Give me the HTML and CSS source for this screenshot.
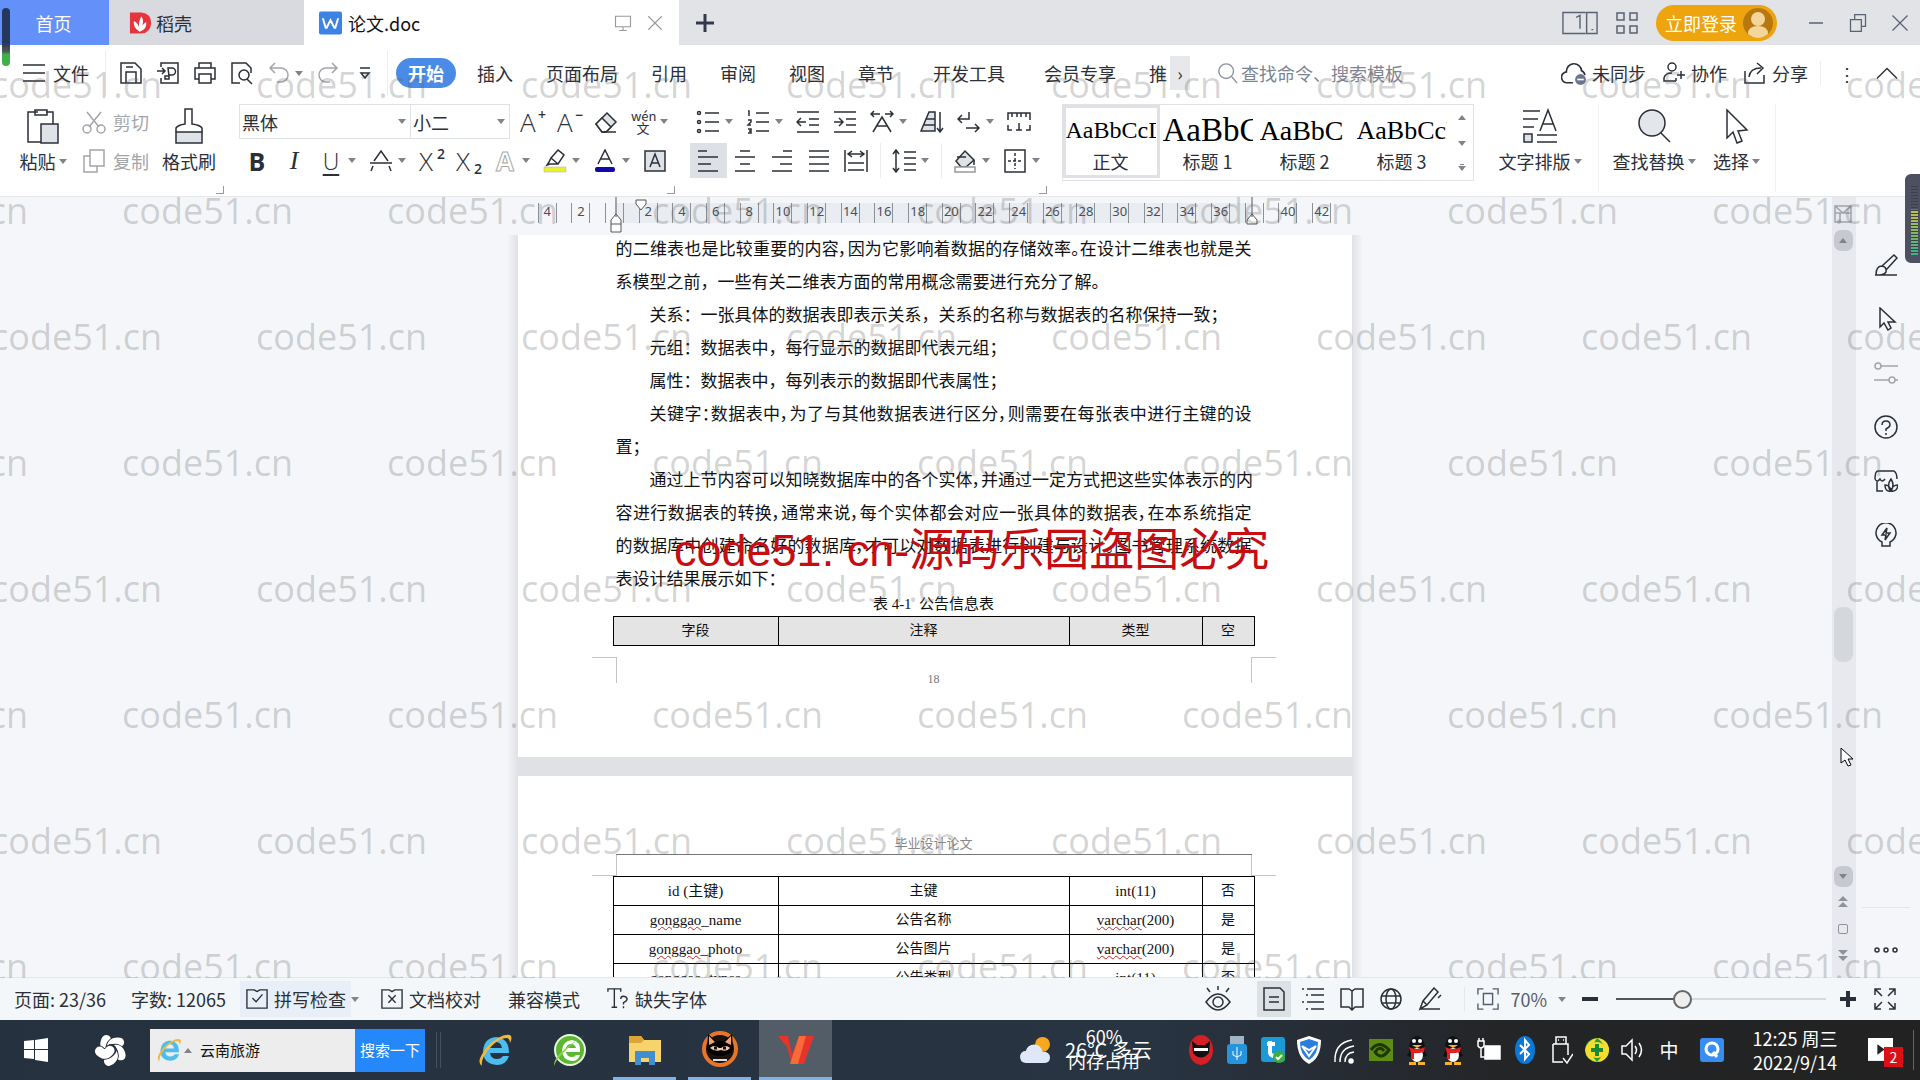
FILE: index.html
```html
<!DOCTYPE html>
<html lang="zh-CN">
<head>
<meta charset="utf-8">
<title>论文.doc</title>
<link rel="stylesheet" href="styles.css">
</head>
<body>
<svg class="sprite" aria-hidden="true">
  <symbol id="save" viewBox="0 0 24 24"><path d="M2 2h14l6 6v14H2zM7 22V11h10v11M7 6h7"/></symbol>
  <symbol id="export" viewBox="0 0 24 24"><path d="M5 6V2h17v20H5v-5M1 10h8M6 7l3 3-3 3M12 7h4a3 3 0 0 1 0 7h-3v4h-4v-3h4z"/></symbol>
  <symbol id="print" viewBox="0 0 24 24"><path d="M6 7V2h12v5M6 18H2V7h20v11h-4M6 13h12v9H6z"/></symbol>
  <symbol id="preview" viewBox="0 0 24 24"><path d="M10 22H2V2h14l5 5v5"/><circle cx="14" cy="14" r="5"/><path d="M17 18l5 5"/></symbol>
  <symbol id="undo" viewBox="0 0 24 24"><path d="M8 2L3 7l5 5M3 7h11a7 7 0 0 1 0 14h-4"/></symbol>
  <symbol id="redo" viewBox="0 0 24 24"><path d="M16 2l5 5-5 5M21 7H10a7 7 0 0 0 0 14h4"/></symbol>
  <symbol id="more" viewBox="0 0 24 24"><path d="M7 7h10M8 12h8l-4 5z"/></symbol>
  <symbol id="lens" viewBox="0 0 24 24"><circle cx="10" cy="10" r="8"/><path d="M16 16l6 7"/></symbol>
  <symbol id="cloud" viewBox="0 0 24 24"><path d="M11 21H6a5 5 0 0 1-1-10 7 7 0 0 1 14-1 5 5 0 0 1 3 4"/><circle cx="18" cy="18" r="5" fill="#6a7690" stroke="none"/><path d="M15 18h6" stroke="#fff"/></symbol>
  <symbol id="team" viewBox="0 0 24 24"><circle cx="10" cy="6" r="4"/><path d="M14 20H2v-3q1-5 8-5M14 20v-3M19 10v8M15 14h8"/></symbol>
  <symbol id="share" viewBox="0 0 24 24"><path d="M2 10v12h19v-8M6 16Q7 7 18 7M14 2l6 5-6 6"/></symbol>
  <symbol id="cut" viewBox="0 0 24 24"><path d="M5 2l12 15M19 2L7 17"/><circle cx="5" cy="19" r="4"/><circle cx="19" cy="19" r="4"/></symbol>
  <symbol id="copy" viewBox="0 0 24 24"><path d="M8 1h14v16H8zM8 7H2v16h13v-6"/></symbol>
  <symbol id="paste" viewBox="0 0 34 36"><path d="M12 4H2v30h14M20 4h7v12"/><path d="M9 2h12v5H9z"/><path d="M15 16h17v19H15z" fill="#dfe3e8"/></symbol>
  <symbol id="brush" viewBox="0 0 30 36"><path d="M2 24h26v11H2z" fill="#dfe3e8"/><path d="M2 24v-4q2-3 9-4V1h7v15q8 1 10 4v4"/></symbol>
  <symbol id="eraser" viewBox="0 0 24 24"><path d="M2 14L13 3l9 9-10 10H8z" fill="#dfe3e8"/><path d="M2 14l6-6 9 9-5 5H8z" fill="#fff"/><path d="M8 22h14"/></symbol>
  <symbol id="strike" viewBox="0 0 24 24"><path d="M5 12l7-10 7 10M1 14h22M4 17l-2 5M20 17l2 5"/></symbol>
  <symbol id="hilite" viewBox="0 0 24 24"><path d="M1 18h22v5H1z" fill="#eaf22c" stroke="#aaa" stroke-width=".5"/><path d="M8 9l7-8 6 5-6 9H7l-3 1 2-3zM8 9l7 6"/></symbol>
  <symbol id="fcolor" viewBox="0 0 24 24"><rect x="2" y="18" width="20" height="5" rx="2" fill="#1207a8" stroke="none"/><path d="M5 15l7-14 7 14M8 10h8"/></symbol>
  <symbol id="boxa" viewBox="0 0 24 24"><path d="M2 2h20v20H2z" fill="#dfe3e8"/><path d="M7 18l5-13 5 13M9 14h6"/></symbol>
  <symbol id="bullets" viewBox="0 0 24 24"><path d="M9 3h14M9 12h14M9 21h14"/><circle cx="3" cy="3" r="1.500"/><circle cx="3" cy="12" r="1.500"/><circle cx="3" cy="21" r="1.500"/></symbol>
  <symbol id="numbers" viewBox="0 0 24 24"><path d="M10 3h13M10 12h13M10 21h13M2 1h1v5M2 10h3v2l-3 3h3M2 19h3v4H2M3 21h2"/></symbol>
  <symbol id="outdent" viewBox="0 0 24 24"><path d="M1 2h22M13 9h10M13 15h10M1 22h22M10 12H1M5 8l-4 4 4 4"/></symbol>
  <symbol id="indent" viewBox="0 0 24 24"><path d="M1 2h22M13 9h10M13 15h10M1 22h22M1 12h9M6 8l4 4-4 4"/></symbol>
  <symbol id="awide" viewBox="0 0 24 24"><path d="M3 22L12 7l9 15M7 16h10M1 4h9M4 1L1 4l3 3M23 4h-8M20 1l3 3-3 3"/></symbol>
  <symbol id="sort" viewBox="0 0 24 24"><path d="M1 21L9 2h6v19zM6 9h9M4 15h11" fill="#dfe3e8"/><path d="M20 2v20M17 18l3 4 3-4"/></symbol>
  <symbol id="ret" viewBox="0 0 24 24"><path d="M12 2v7H1M5 5L1 9l4 4M9 18h13M18 14l4 4-4 4"/></symbol>
  <symbol id="tabs" viewBox="0 0 24 24"><path d="M1 10V3h22v7M5 3v4M10 3v4M14 3v4M19 3v4M1 15v5h4M23 15v5h-4M12 13v7M9 20h6"/></symbol>
  <symbol id="left" viewBox="0 0 24 24"><path d="M2 2h9M2 8h20M2 15h13M2 22h20"/></symbol>
  <symbol id="center" viewBox="0 0 24 24"><path d="M7 2h10M2 8h20M7 15h10M2 22h20"/></symbol>
  <symbol id="right" viewBox="0 0 24 24"><path d="M13 2h9M2 8h20M10 15h12M2 22h20"/></symbol>
  <symbol id="justify" viewBox="0 0 24 24"><path d="M2 2h20M2 8h20M2 15h20M2 22h20"/></symbol>
  <symbol id="distr" viewBox="0 0 24 24"><path d="M1 1v22M23 1v22M4 5h16M8 2L4 5l4 3M16 2l4 3-4 3M4 14h16M4 21h16"/></symbol>
  <symbol id="spacing" viewBox="0 0 24 24"><path d="M4 1v22M1 5l3-4 3 4M1 19l3 4 3-4M12 3h12M12 9h12M12 15h12M12 21h12"/></symbol>
  <symbol id="fill" viewBox="0 0 24 24"><path d="M3 12L12 2l9 9-8 7H8z" fill="#dfe3e8"/><path d="M2 18h20v5H2z" fill="#fff" stroke="#999"/><path d="M4 8h9M21 11v5"/></symbol>
  <symbol id="border" viewBox="0 0 24 24"><path d="M2 1h20v22H2z"/><path d="M12 4v16M5 12h14" stroke-dasharray="3 2"/></symbol>
  <symbol id="typeset" viewBox="0 0 36 36"><path d="M1 3h17M1 11h15M1 19h11M18 23l8-21 8 21M21 16h10M15 27h20M15 34h20"/><path d="M2 26h8v8H2z" fill="#dfe3e8"/></symbol>
  <symbol id="find" viewBox="0 0 36 36"><circle cx="16" cy="15" r="13" fill="#e3e6ea"/><path d="M25 25l9 9"/></symbol>
  <symbol id="pointer" viewBox="0 0 24 36"><path d="M2 2v28l6-6 4 11 5-2-4-10 9-1z" fill="#fff"/></symbol>
  <symbol id="screen" viewBox="0 0 24 24"><path d="M2 3h20v14H2zM12 17v5M7 22h10"/></symbol>
  <symbol id="x" viewBox="0 0 24 24"><path d="M3 3l18 18M21 3L3 21"/></symbol>
  <symbol id="win" viewBox="0 0 24 24"><path d="M3 8h13v14H3zM8 8V2h13v14h-5"/></symbol>
  <symbol id="apps" viewBox="0 0 24 24"><path d="M2 2h7v7H2zM15 2h7v7h-7zM2 15h7v7H2zM15 15h7v7h-7z"/></symbol>
  <symbol id="device" viewBox="0 0 38 24"><path d="M25 1H1v22h24M37 1H26v22h11zM15 6l4-2v14M31 19h2"/></symbol>
  <symbol id="sbrush" viewBox="0 0 24 24"><path d="M1 22h22M2 22q0-9 6-9 5 1 4 6-2 3-7 3M8 13L20 2l3 3-11 12"/></symbol>
  <symbol id="scursor" viewBox="0 0 24 24"><path d="M6 1v19l4-4 4 7 3-2-3-6h7z"/></symbol>
  <symbol id="sliders" viewBox="0 0 24 24"><circle cx="4" cy="5" r="3"/><circle cx="18" cy="19" r="3"/><path d="M7 5h17M0 19h15M21 19h3"/></symbol>
  <symbol id="help" viewBox="0 0 24 24"><circle cx="12" cy="12" r="11"/><path d="M8 10q0-4 4-4t4 4q0 2-4 4v2M12 18v2"/></symbol>
  <symbol id="shop" viewBox="0 0 24 24"><path d="M3 12v10h6M1 10q0-8 3-8h16q3 2 3 8M1 10q2 4 5 0 2 4 5 0"/><path d="M17 22q-5-5 0-12 4 6 0 12zM17 22q-6 1-6-6 5 0 6 6zM17 22q6 1 7-6-6 0-7 6z"/></symbol>
  <symbol id="bulb" viewBox="0 0 24 24"><path d="M8 23v-4a10 10 0 1 1 8 0v4zM13 5l-5 7h4l-1 5 5-7h-4z"/></symbol>
  <symbol id="check" viewBox="0 0 24 24"><path d="M12 4l-3-2H1v20h7M12 4l3-2h8v20H1M7 11l4 4 7-8"/></symbol>
  <symbol id="proof" viewBox="0 0 24 24"><path d="M12 4l-3-2H1v20h22V2h-8zM8 8l8 8M16 8l-8 8"/></symbol>
  <symbol id="tq" viewBox="0 0 24 24"><path d="M1 4V1h14v3M8 1v20M5 21h6M15 12q0-3 3-3t4 3q0 2-4 4v2M18 20v2"/></symbol>
  <symbol id="eye" viewBox="0 0 28 28"><path d="M2 17q12-16 24 0-12 16-24 0zM14 1v4M3 3l3 4M25 3l-3 4"/><circle cx="14" cy="17" r="5"/></symbol>
  <symbol id="doc" viewBox="0 0 24 24"><path d="M2 1h16l4 4v18H2zM7 10h10M7 15h10"/></symbol>
  <symbol id="outline" viewBox="0 0 24 24"><path d="M1 2h2M6 2h17M5 8h2M10 8h13M1 15h2M6 15h17M5 22h2M10 22h13"/></symbol>
  <symbol id="book" viewBox="0 0 24 24"><path d="M12 4l-3-2H1v18h8l3 3 3-3h8V2h-8zM12 4v18"/></symbol>
  <symbol id="globe" viewBox="0 0 24 24"><circle cx="12" cy="12" r="10"/><ellipse cx="12" cy="12" rx="5" ry="10"/><path d="M2 9h20M2 16h20"/></symbol>
  <symbol id="pen" viewBox="0 0 24 24"><path d="M2 22l3-8L16 1l4 4L9 18zM2 22h20M5 14l4 4M20 11l3-3"/></symbol>
  <symbol id="fit" viewBox="0 0 24 24"><path d="M7 1H1v6M17 1h6v6M1 17v6h6M23 17v6h-6M7 6h10v12H7z"/></symbol>
  <symbol id="expand" viewBox="0 0 24 24"><path d="M2 8V2h6M2 2l7 7M16 2h6v6M22 2l-7 7M2 16v6h6M2 22l7-7M22 16v6h-6M22 22l-7-7"/></symbol>
  <symbol id="ie" viewBox="0 0 36 36"><path d="M32 21H13q1 6 7 6 4 0 6-3h6q-3 9-12 9Q6 32 6 19 7 6 19 5q13 1 13 16zM13 16h12q-1-6-6-6t-6 6z" fill="#4dbdf0" stroke="none"/><path d="M5 34Q-2 30 10 15 24 1 33 3q3 2 0 8 0-5-4-5Q18 7 7 24q-3 6-2 10z" fill="#f0b93a" stroke="none"/></symbol>
  <symbol id="penguin" viewBox="0 0 24 32"><g stroke="none"><ellipse cx="12" cy="14" rx="8" ry="12" fill="#111"/><path d="M2 22l4-8h12l4 8-4 1H6z" fill="#111"/><ellipse cx="12" cy="21" rx="6" ry="7" fill="#fff"/><path d="M4 13q8 4 16 0l-1 5q-7 2-10 1v6H6v-6z" fill="#e32020"/><circle cx="9" cy="7" r="2" fill="#fff"/><circle cx="15" cy="7" r="2" fill="#fff"/><path d="M7 11h10l-5 3zM4 28h7v3H4zM13 28h7v3h-7z" fill="#f6b42c"/></g></symbol>
  <symbol id="petal" viewBox="0 0 36 36"><path d="M18 18Q9 15 13 7" fill="none" stroke="#27323f" stroke-width="12" stroke-linecap="round"/><path d="M17 17Q9 15 13 7" fill="none" stroke="#fff" stroke-width="10" stroke-linecap="round"/></symbol>
</svg>

<div class="app">
  <header class="titlebar">
    <button class="tab home">首页</button>
    <button class="tab docer">
      <svg class="logo" viewBox="0 0 24 24"><path d="M1 1h12q10 1 10 11t-10 11H1z" fill="#e8343d"/><path d="M11 21Q4 17 5 10q5 2 6 9-2-8 2-14 4 6-1 14 2-6 6-8 1 8-7 10z" fill="#fff"/></svg>稻壳
    </button>
    <div class="tab current">
      <svg class="logo" viewBox="0 0 24 24"><rect width="24" height="24" rx="2" fill="#3e82e4"/><path d="M4 7l3 10h1l4-8 4 8h1l3-10" fill="none" stroke="#fff" stroke-width="2"/></svg>
      <span class="name">论文.doc</span>
      <svg class="i s18"><use href="#screen"/></svg>
      <button class="plain" aria-label="关闭"><svg class="i s18"><use href="#x"/></svg></button>
    </div>
    <button class="plain add" aria-label="新建"><svg class="i s20" viewBox="0 0 20 20"><path d="M10 1v18M1 10h18"/></svg></button>
    <div class="winctl">
      <svg class="i dev"><use href="#device"/></svg>
      <svg class="i s24"><use href="#apps"/></svg>
      <button class="login">立即登录<svg viewBox="0 0 30 30"><circle cx="15" cy="15" r="15" fill="#b9780f"/><circle cx="15" cy="11" r="7" fill="#f4d69b"/><path d="M5 26q0-8 10-8t10 8q-10 8-20 0z" fill="#f4d69b"/></svg></button>
      <button class="plain" aria-label="最小化"><svg class="i s20" viewBox="0 0 20 20"><path d="M3 10h14"/></svg></button>
      <button class="plain" aria-label="还原"><svg class="i s20"><use href="#win"/></svg></button>
      <button class="plain" aria-label="关闭窗口"><svg class="i s20"><use href="#x"/></svg></button>
    </div>
  </header>

  <nav class="menubar">
    <button class="plain file"><svg class="i s24" viewBox="0 0 24 24"><path d="M1 4h22M1 12h22M1 20h22"/></svg>文件</button>
    <div class="quick">
      <button class="plain" aria-label="保存"><svg class="i s24"><use href="#save"/></svg></button>
      <button class="plain" aria-label="输出"><svg class="i s24"><use href="#export"/></svg></button>
      <button class="plain" aria-label="打印"><svg class="i s24"><use href="#print"/></svg></button>
      <button class="plain" aria-label="预览"><svg class="i s24"><use href="#preview"/></svg></button>
      <button class="plain dim" aria-label="撤销"><svg class="i s24"><use href="#undo"/></svg><i class="caret"></i></button>
      <button class="plain dim" aria-label="恢复"><svg class="i s24"><use href="#redo"/></svg></button>
      <button class="plain" aria-label="更多"><svg class="i s24"><use href="#more"/></svg></button>
    </div>
    <div class="tabs">
      <a href="#" class="on">开始</a><a href="#">插入</a><a href="#">页面布局</a><a href="#">引用</a><a href="#">审阅</a><a href="#">视图</a><a href="#">章节</a><a href="#" class="wide">开发工具</a><a href="#" class="wide">会员专享</a><a href="#" class="cut">推</a>
      <button class="next">›</button>
    </div>
    <label class="search"><svg class="i s22"><use href="#lens"/></svg><input type="text" placeholder="查找命令、搜索模板"></label>
    <div class="collab">
      <button class="plain"><svg class="i s26"><use href="#cloud"/></svg>未同步</button>
      <button class="plain"><svg class="i s24"><use href="#team"/></svg>协作</button>
      <button class="plain"><svg class="i s24"><use href="#share"/></svg>分享</button>
      <span class="dots">⋮</span>
      <button class="plain" aria-label="收起"><svg class="i s22" viewBox="0 0 24 24"><path d="M1 18L12 7l11 11"/></svg></button>
    </div>
  </nav>

  <section class="ribbon">
    <div class="group clip">
      <button class="big paste"><svg class="i"><use href="#paste"/></svg><span>粘贴<i class="caret"></i></span></button>
      <div class="pair">
        <button class="plain dim"><svg class="i s24"><use href="#cut"/></svg>剪切</button>
        <button class="plain dim"><svg class="i s24"><use href="#copy"/></svg>复制</button>
      </div>
      <button class="big fmt"><svg class="i"><use href="#brush"/></svg><span>格式刷</span></button>
    </div>
    <div class="group rows font">
      <div class="row">
        <div class="combo"><button class="family">黑体<i class="caret"></i></button><button class="size">小二<i class="caret"></i></button></div>
        <button class="ib"><b class="ga">A<sup>+</sup></b></button><button class="ib"><b class="ga">A<sup>−</sup></b></button><button class="ib" aria-label="清除"><svg class="i s24"><use href="#eraser"/></svg></button><button class="ib dd"><span class="wen">wén<br>文</span><i class="caret"></i></button>
      </div>
      <div class="row">
        <button class="ib"><b class="bold">B</b></button><button class="ib"><em class="ital">I</em></button><button class="ib dd"><u class="und">U</u><i class="caret"></i></button><button class="ib dd" aria-label="删除线"><svg class="i s24"><use href="#strike"/></svg><i class="caret"></i></button><button class="ib"><b class="ga">X<sup>2</sup></b></button><button class="ib"><b class="ga">X<sub>2</sub></b></button><button class="ib dd"><b class="hollow">A</b><i class="caret"></i></button><button class="ib dd" aria-label="突出显示"><svg class="i s24"><use href="#hilite"/></svg><i class="caret"></i></button><button class="ib dd" aria-label="字体颜色"><svg class="i s24"><use href="#fcolor"/></svg><i class="caret"></i></button><button class="ib" aria-label="字符底纹"><svg class="i s24"><use href="#boxa"/></svg></button>
      </div>
    </div>
    <div class="group rows para">
      <div class="row">
        <button class="ib dd" aria-label="项目符号"><svg class="i s24"><use href="#bullets"/></svg><i class="caret"></i></button><button class="ib dd" aria-label="编号"><svg class="i s24"><use href="#numbers"/></svg><i class="caret"></i></button><button class="ib" aria-label="减少缩进"><svg class="i s24"><use href="#outdent"/></svg></button><button class="ib" aria-label="增加缩进"><svg class="i s24"><use href="#indent"/></svg></button><button class="ib dd" aria-label="中文版式"><svg class="i s24"><use href="#awide"/></svg><i class="caret"></i></button><button class="ib" aria-label="排序"><svg class="i s24"><use href="#sort"/></svg></button><button class="ib dd" aria-label="换行符"><svg class="i s24"><use href="#ret"/></svg><i class="caret"></i></button><button class="ib" aria-label="制表位"><svg class="i s24"><use href="#tabs"/></svg></button>
      </div>
      <div class="row">
        <button class="ib on" aria-label="左对齐"><svg class="i s24"><use href="#left"/></svg></button><button class="ib" aria-label="居中"><svg class="i s24"><use href="#center"/></svg></button><button class="ib" aria-label="右对齐"><svg class="i s24"><use href="#right"/></svg></button><button class="ib" aria-label="两端对齐"><svg class="i s24"><use href="#justify"/></svg></button><button class="ib" aria-label="分散对齐"><svg class="i s24"><use href="#distr"/></svg></button><i class="vr"></i><button class="ib dd" aria-label="行距"><svg class="i s24"><use href="#spacing"/></svg><i class="caret"></i></button><i class="vr"></i><button class="ib dd" aria-label="底纹"><svg class="i s24"><use href="#fill"/></svg><i class="caret"></i></button><button class="ib dd" aria-label="边框"><svg class="i s24"><use href="#border"/></svg><i class="caret"></i></button>
      </div>
    </div>
    <div class="styles">
      <button class="style on"><span class="t24">AaBbCcDd</span>正文</button>
      <button class="style"><span class="t32">AaBbCc</span>标题 1</button>
      <button class="style"><span class="t28">AaBbC</span>标题 2</button>
      <button class="style"><span class="t26">AaBbCcD</span>标题 3</button>
      <div class="spin"><i class="caret up"></i><i class="caret"></i><i class="caret bar"></i></div>
    </div>
    <button class="big typeset"><svg class="i"><use href="#typeset"/></svg><span>文字排版<i class="caret"></i></span></button>
    <button class="big find"><svg class="i"><use href="#find"/></svg><span>查找替换<i class="caret"></i></span></button>
    <button class="big pick"><svg class="i"><use href="#pointer"/></svg><span>选择<i class="caret"></i></span></button>
  </section>

  <main class="workspace">
    <div class="editor">
      <div class="ruler">
        <span><b>4</b></span><span><b>2</b></span><span><b class="zero"></b></span><span><b>2</b></span><span><b>4</b></span><span><b>6</b></span><span><b>8</b></span><span><b>10</b></span><span><b>12</b></span><span><b>14</b></span><span><b>16</b></span><span><b>18</b></span><span><b>20</b></span><span><b>22</b></span><span><b>24</b></span><span><b>26</b></span><span><b>28</b></span><span><b>30</b></span><span><b>32</b></span><span><b>34</b></span><span><b>36</b></span><span><b></b></span><span><b>40</b></span><span><b>42</b></span>
        <svg class="mark first" viewBox="0 0 12 36"><path d="M6 0v20M1 35v-8h10v8zM1 27v-4l5-6 5 6v4"/></svg>
        <svg class="mark hang" viewBox="0 0 12 36"><path d="M1 1h10v4l-5 6-5-6z"/></svg>
        <svg class="mark last" viewBox="0 0 12 36"><path d="M6 0v20M1 27v-4l5-6 5 6v4z"/></svg>
      </div>
      <div class="canvas">
        <div class="pages">
          <article class="page">
            <div class="text">
              <p class="full">的二维表也是比较重要的内容，因为它影响着数据的存储效率。在设计二维表也就是关</p>
              <p>系模型之前，一些有关二维表方面的常用概念需要进行充分了解。</p>
              <p class="in">关系：一张具体的数据表即表示关系，关系的名称与数据表的名称保持一致；</p>
              <p class="in">元组：数据表中，每行显示的数据即代表元组；</p>
              <p class="in">属性：数据表中，每列表示的数据即代表属性；</p>
              <p class="in full">关键字：数据表中，为了与其他数据表进行区分，则需要在每张表中进行主键的设</p>
              <p>置；</p>
              <p class="in full">通过上节内容可以知晓数据库中的各个实体，并通过一定方式把这些实体表示的内</p>
              <p class="full">容进行数据表的转换，通常来说，每个实体都会对应一张具体的数据表，在本系统指定</p>
              <p class="full">的数据库中创建命名好的数据库，才可以对数据表进行创建与设计。图书管理系统数据</p>
              <p>表设计结果展示如下：</p>
            </div>
            <table class="grid">
              <caption>表 4-1&nbsp; 公告信息表</caption>
              <colgroup><col class="c1"><col class="c2"><col class="c3"><col class="c4"></colgroup>
              <thead><tr><th>字段</th><th>注释</th><th>类型</th><th>空</th></tr></thead>
            </table>
            <div class="crop bottom"><i></i><span>18</span><i></i></div>
          </article>
          <article class="page second">
            <div class="running">毕业设计论文</div>
            <div class="crop top"><i></i><i></i></div>
            <table class="grid">
              <colgroup><col class="c1"><col class="c2"><col class="c3"><col class="c4"></colgroup>
              <tbody>
                <tr><td class="lat">id (主键)</td><td>主键</td><td class="lat">int(11)</td><td>否</td></tr>
                <tr><td class="lat"><span class="sp">gonggao</span>_name</td><td>公告名称</td><td class="lat"><span class="sp">varchar</span>(200)</td><td>是</td></tr>
                <tr><td class="lat"><span class="sp">gonggao</span>_photo</td><td>公告图片</td><td class="lat"><span class="sp">varchar</span>(200)</td><td>是</td></tr>
                <tr><td class="lat"><span class="sp">gonggao</span>_types</td><td>公告类型</td><td class="lat">int(11)</td><td>否</td></tr>
              </tbody>
            </table>
          </article>
        </div>
      </div>
    </div>
    <div class="scroll">
      <svg class="i s18 top" viewBox="0 0 18 18"><path d="M1 1h16v16H1zM1 8h16M6 8v9M1 1l8 7 8-7"/></svg>
      <button aria-label="向上"><i class="caret up"></i></button>
      <div class="thumb"></div>
      <button class="down" aria-label="向下"><i class="caret"></i></button>
      <svg class="nav" viewBox="0 0 12 12"><path d="M6 0l5 5H1zM6 6l5 5H1z"/></svg>
      <i class="sq"></i>
      <svg class="nav" viewBox="0 0 12 12"><path d="M6 5l5-5H1zM6 11l5-5H1z"/></svg>
    </div>
    <aside class="side">
      <svg class="i s24"><use href="#sbrush"/></svg>
      <svg class="i s24"><use href="#scursor"/></svg>
      <svg class="i s24 dim"><use href="#sliders"/></svg>
      <svg class="i s24"><use href="#help"/></svg>
      <svg class="i s24"><use href="#shop"/></svg>
      <svg class="i s24"><use href="#bulb"/></svg>
      <div class="more"><svg class="i s24" viewBox="0 0 24 24"><circle cx="3" cy="12" r="2"/><circle cx="12" cy="12" r="2"/><circle cx="21" cy="12" r="2"/></svg></div>
    </aside>
  </main>

  <footer class="status">
    <span class="pg">页面: 23/36</span>
    <span class="wc">字数: 12065</span>
    <button class="plain spell"><svg class="i s22"><use href="#check"/></svg>拼写检查</button><i class="caret"></i>
    <button class="plain proof"><svg class="i s22"><use href="#proof"/></svg>文档校对</button>
    <span class="compat">兼容模式</span>
    <button class="plain"><svg class="i s22"><use href="#tq"/></svg>缺失字体</button>
    <div class="views">
      <svg class="i s28"><use href="#eye"/></svg>
      <button class="view on" aria-label="页面视图"><svg class="i s24"><use href="#doc"/></svg></button>
      <button class="view" aria-label="大纲"><svg class="i s24"><use href="#outline"/></svg></button>
      <button class="view" aria-label="阅读"><svg class="i s24"><use href="#book"/></svg></button>
      <button class="view" aria-label="网页"><svg class="i s24"><use href="#globe"/></svg></button>
      <button class="view" aria-label="书写"><svg class="i s24"><use href="#pen"/></svg></button>
    </div>
    <button class="plain zoomv"><svg class="i s22"><use href="#fit"/></svg>70%<i class="caret"></i></button>
    <button class="plain" aria-label="缩小"><svg class="i s18 thick" viewBox="0 0 18 18"><path d="M1 9h16"/></svg></button>
    <input class="zoom" type="range" min="0" max="100" value="30" aria-label="缩放">
    <button class="plain" aria-label="放大"><svg class="i s18 thick" viewBox="0 0 18 18"><path d="M1 9h16M9 1v16"/></svg></button>
    <svg class="i s24"><use href="#expand"/></svg>
  </footer>

  <div class="taskbar">
    <button class="plain start" aria-label="开始菜单"><svg viewBox="0 0 24 24"><path d="M0 3l10-1v9H0zM11 2l13-2v11H11zM0 12h10v9L0 20zM11 12h13v12l-13-2z" fill="#fff"/></svg></button>
    <svg class="swirl" viewBox="0 0 36 36"><use href="#petal" width="36" height="36"/><use href="#petal" width="36" height="36" transform="rotate(72 18 18)"/><use href="#petal" width="36" height="36" transform="rotate(144 18 18)"/><use href="#petal" width="36" height="36" transform="rotate(216 18 18)"/><use href="#petal" width="36" height="36" transform="rotate(288 18 18)"/></svg>
    <form class="find-box"><svg class="s26"><use href="#ie"/></svg><i class="caret up"></i><input type="text" value="云南旅游" aria-label="搜索"><button type="button">搜索一下</button></form>
    <i class="grip"></i>
    <div class="apps">
      <button aria-label="浏览器"><svg><use href="#ie"/></svg></button>
      <button aria-label="安全浏览器"><svg viewBox="0 0 36 36"><circle cx="18" cy="18" r="15" fill="#5cb832" stroke="#e8f7dd" stroke-width="2"/><path d="M28 20H14q1 5 6 5 3 0 4-2h4q-2 6-8 6-10-1-10-11 1-9 10-10 9 1 8 12zM14 16h10q-1-4-5-4t-5 4z" fill="#fff"/><path d="M2 34Q1 22 33 3 26 6 12 20 4 28 2 34z" fill="#86d54f"/></svg></button>
      <button class="open" aria-label="文件夹"><svg viewBox="0 0 36 36"><path d="M2 5h12l3 4h17v22H2z" fill="#f7d36b"/><path d="M2 5h12l3 4-3 3H2z" fill="#dca538"/><path d="M8 20h20v14h-6v-7h-8v7H8z" fill="#3f8fd2"/></svg></button>
      <button class="open" aria-label="录屏"><svg viewBox="0 0 36 36"><circle cx="18" cy="18" r="16" fill="#18130f" stroke="#e9752a" stroke-width="4"/><path d="M6 3l8 7h8l8-7 1 14q-3 8-13 8T5 17z" fill="#000"/><path d="M7 5l6 6-6 3zM29 5l-6 6 6 3z" fill="#f4a46c"/><path d="M8 17q4-4 9 0 1 0 2 0 5-4 9 0-3 4-9 2-6 2-11-2z" fill="#f7c9a8"/><path d="M12 17h3M21 17h3" stroke="#111" stroke-width="3"/><path d="M11 29h14" stroke="#ddd" stroke-width="2"/></svg></button>
      <button class="open active" aria-label="WPS"><svg viewBox="0 0 36 36"><path d="M0 5h10l4 18 7-17h9l-7 27h-9L9 16z" fill="#e6342b"/><path d="M27 5h9L26 33h-9z" fill="#e6342b"/><path d="M12 33L21 5h7l-8 28z" fill="#f86a38"/></svg></button>
    </div>
    <div class="weather">
      <svg viewBox="0 0 36 30"><circle cx="25" cy="9" r="8" fill="#f7a81f"/><path d="M7 29q-7-1-6-8 1-5 6-5 2-7 9-7t9 8q8 0 8 6t-7 6z" fill="#dfe8f8"/></svg>
      <span class="temp">26°C 多云</span><span class="mem">60%<br>内存占用</span>
    </div>
    <div class="tray">
      <svg viewBox="0 0 24 32"><ellipse cx="12" cy="16" rx="12" ry="15" fill="#d51f27"/><path d="M3 7l5 4h8l5-4-1 12q-8 9-16 0z" fill="#111"/><path d="M5 14h14v3H5z" fill="#fff"/></svg>
      <svg viewBox="0 0 24 32"><path d="M5 2h14v9H5z" fill="#9fb4c4"/><rect x="2" y="10" width="20" height="20" rx="3" fill="#2494dd"/><path d="M12 26V13M8 17v4l4 2 4-2v-4" stroke="#fff" fill="none"/></svg>
      <svg viewBox="0 0 24 32"><rect y="3" width="24" height="25" rx="3" fill="#1a9ad7"/><path d="M6 10h8M9 7v12q1 4 7 2" stroke="#fff" stroke-width="4" fill="none"/><circle cx="18" cy="23" r="6" fill="#3aae3a"/><path d="M15 23l2 2 4-4" stroke="#fff" stroke-width="2" fill="none"/></svg>
      <svg viewBox="0 0 24 32"><path d="M0 6l12-4 12 4q0 18-12 24Q0 24 0 6z" fill="#fff"/><path d="M3 8l9-3 9 3q0 13-9 18Q3 21 3 8z" fill="#2b7de0"/><path d="M5 12l7 4 7-4-7 10z" fill="none" stroke="#fff" stroke-width="2"/></svg>
      <svg class="ln" viewBox="0 0 24 32"><path d="M2 28Q1 9 19 6M7 28q0-14 14-16M12 28q0-9 9-10"/><circle cx="18" cy="27" r="2" fill="#fff"/></svg>
      <svg viewBox="0 0 24 32"><path d="M0 5h24v22H0z" fill="#5c8d10"/><path d="M2 16q8-11 18 0-8 11-14 2 5-7 9-1" fill="none" stroke="#1e3600" stroke-width="3"/></svg>
      <svg><use href="#penguin"/></svg><svg><use href="#penguin"/></svg>
      <svg class="ln" viewBox="0 0 24 32"><path d="M8 12h15v13H8z" fill="#fff"/><path d="M1 7v5q3 4 6 0V7zM2 4v3M6 4v3M4 14v9h4"/></svg>
      <svg viewBox="0 0 24 32"><ellipse cx="12" cy="16" rx="10" ry="14" fill="#0a78d6"/><path d="M7 11l9 9-4 5V6l4 5-9 9" stroke="#fff" stroke-width="2" fill="none"/></svg>
      <svg class="ln" viewBox="0 0 24 32"><path d="M7 10V3h10v7M4 10h15v11M4 10v18h10M9 6h1M14 6h1M14 24l4 5 6-9"/></svg>
      <svg viewBox="0 0 24 32"><circle cx="12" cy="16" r="12" fill="#23a043"/><path d="M12 4a12 12 0 0 1 0 24Q26 14 12 4zM0 16Q2 6 12 4 2 18 12 28 1 26 0 16z" fill="#f8dc2e"/><circle cx="12" cy="16" r="8" fill="#f8dc2e"/><path d="M12 10v12M6 16h12" stroke="#168a35" stroke-width="4"/></svg>
      <svg class="ln" viewBox="0 0 24 32"><path d="M1 12h4l6-6v20l-6-6H1zM14 12q3 4 0 8M18 9q5 7 0 14"/></svg>
      <span class="ime">中</span>
      <svg class="q" viewBox="0 0 24 32"><rect y="4" width="24" height="24" rx="3" fill="#3a8df0"/><circle cx="12" cy="15" r="6" fill="none" stroke="#fff" stroke-width="3"/><path d="M13 18l4 5" stroke="#fff" stroke-width="3"/></svg>
    </div>
    <div class="clock">12:25 周三<br>2022/9/14</div>
    <button class="notice" aria-label="通知"><svg viewBox="0 0 24 24"><path d="M0 0h24v22H0z" fill="#fff"/><path d="M9 6l7 5-7 5z" fill="#222"/></svg><span>2</span></button>
  </div>

  <i class="meter left"></i>
  <i class="meter right"></i>
  <div class="marks" aria-hidden="true">
    <div><span>code51.cn</span><span>code51.cn</span><span>code51.cn</span><span>code51.cn</span><span>code51.cn</span><span>code51.cn</span><span>code51.cn</span><span>code51.cn</span></div>
    <div><span>code51.cn</span><span>code51.cn</span><span>code51.cn</span><span>code51.cn</span><span>code51.cn</span><span>code51.cn</span><span>code51.cn</span><span>code51.cn</span></div>
    <div><span>code51.cn</span><span>code51.cn</span><span>code51.cn</span><span>code51.cn</span><span>code51.cn</span><span>code51.cn</span><span>code51.cn</span><span>code51.cn</span></div>
    <div><span>code51.cn</span><span>code51.cn</span><span>code51.cn</span><span>code51.cn</span><span>code51.cn</span><span>code51.cn</span><span>code51.cn</span><span>code51.cn</span></div>
    <div><span>code51.cn</span><span>code51.cn</span><span>code51.cn</span><span>code51.cn</span><span>code51.cn</span><span>code51.cn</span><span>code51.cn</span><span>code51.cn</span></div>
    <div><span>code51.cn</span><span>code51.cn</span><span>code51.cn</span><span>code51.cn</span><span>code51.cn</span><span>code51.cn</span><span>code51.cn</span><span>code51.cn</span></div>
    <div><span>code51.cn</span><span>code51.cn</span><span>code51.cn</span><span>code51.cn</span><span>code51.cn</span><span>code51.cn</span><span>code51.cn</span><span>code51.cn</span></div>
    <div><span>code51.cn</span><span>code51.cn</span><span>code51.cn</span><span>code51.cn</span><span>code51.cn</span><span>code51.cn</span><span>code51.cn</span><span>code51.cn</span></div>
  </div>
  <div class="notice-text">code51. cn-源码乐园盗图必究</div>
  <svg class="mouse" viewBox="0 0 14 20"><path d="M1 1v15l4-3 3 6 3-1-3-6h5z" fill="#fff" stroke="#000"/></svg>
</div>
</body>
</html>
```
FILE: styles.css
```css
* { box-sizing: border-box; }
body { margin: 0; font: 18px/24px "Noto Sans CJK SC", sans-serif; color: #2b3038; }
button, input { font: inherit; color: inherit; border: 0; background: none; padding: 0; margin: 0; }
a { color: inherit; text-decoration: none; }
.sprite { position: absolute; width: 0; height: 0; }
.app { position: relative; display: flex; flex-direction: column; height: 100vh; overflow: hidden; background: #fff; white-space: nowrap; }

.i { fill: none; stroke: currentColor; stroke-width: 1.5; flex: none; display: block; }
.s18 { width: 18px; height: 18px; }
.s20 { width: 20px; height: 20px; }
.s22 { width: 22px; height: 22px; }
.s24 { width: 24px; height: 24px; }
.s26 { width: 26px; height: 26px; }
.s28 { width: 28px; height: 28px; }
.thick { stroke-width: 4; }
.plain { display: flex; align-items: center; flex: none; }
.dim { color: #a2a5aa; }
.caret { display: inline-block; flex: none; border: 4px solid transparent; border-top: 5px solid #80848a; border-bottom: 0; }
.caret.up { border-top: 0; border-bottom: 5px solid #80848a; }

/* title bar */
.titlebar { display: flex; align-items: stretch; height: 45px; background: #e1e3e6; flex: none; }
.tab { display: flex; align-items: center; }
.home { width: 109px; padding-right: 2px; justify-content: center; background: #6490fa; color: #fff; }
.docer { width: 195px; padding-left: 20px; gap: 4px; background: #d8dadf; }
.logo { width: 23px; height: 24px; }
.docer .logo { height: 26px; }
.current { width: 375px; padding: 0 15px; gap: 14px; background: #fff; color: #111; }
.current .logo { margin-right: -8px; }
.current .name { flex: 1; }
.current .i { color: #999; }
.add { margin-left: 16px; color: #333b4a; }
.add .i { stroke-width: 3; }
.winctl { display: flex; align-items: center; margin-left: auto; padding-right: 10px; color: #596275; }
.winctl .dev { width: 36px; height: 24px; margin-right: 17px; }
.login { display: flex; align-items: center; gap: 6px; height: 36px; width: 121px; margin: 0 29px 0 17px; padding-left: 9px; border-radius: 18px; background: #eea40c; color: #fff; }
.login svg { width: 30px; height: 30px; flex: none; }
.winctl .plain + .plain { margin-left: 22px; }

/* menu row */
.menubar { display: flex; align-items: center; height: 58px; padding-bottom: 2px; flex: none; }
.file { gap: 7px; margin-left: 22px; padding-right: 16px; height: 46px; border-right: 1px solid #eceef0; }
.quick { display: flex; align-items: center; gap: 13px; padding: 0 10px 0 13px; border-right: 1px solid #eceef0; height: 46px; }
.quick .caret { margin-left: 4px; }
.tabs { display: flex; align-items: center; margin-left: 8px; }
.tabs a { padding: 0 16px 0 17px; }
.tabs .on { width: 60px; padding: 3px 12px; margin-right: 4px; border-radius: 15px; background: #4a8be8; color: #fff; font-weight: bold; }
.tabs .wide { margin-left: 6px; }
.tabs .cut { padding-right: 3px; }
.next { width: 20px; height: 34px; background: #e6e8eb; line-height: 30px; }
.search { display: flex; align-items: center; gap: 2px; flex: 1; margin-left: 27px; color: #8b919c; }
.search input { width: 220px; }
.search input::placeholder { color: #7d8594; opacity: 1; }
.collab { display: flex; align-items: center; gap: 16px; padding-right: 22px; }
.collab .plain { gap: 5px; }
.dots { width: 40px; text-align: center; border-left: 1px solid #eceef0; margin-left: -4px; padding-left: 13px; }

/* ribbon */
.ribbon { display: flex; height: 94px; padding-top: 1px; flex: none; border-bottom: 1px solid #e4e6ea; }
.group { position: relative; display: flex; }
.group::after { content: ""; position: absolute; right: 0; bottom: 2px; width: 7px; height: 7px; border: solid #999; border-width: 0 1px 1px 0; }
.clip { width: 224px; padding-left: 18px; }
.big { display: flex; flex-direction: column; align-items: center; height: 74px; padding-top: 4px; flex: none; }
.big .i { width: 36px; height: 36px; margin-bottom: 5px; }
.big span { display: flex; align-items: center; gap: 3px; }
.paste { width: 50px; }
.pair { display: grid; grid-template-rows: 35px 35px; gap: 4px; margin-left: 14px; width: 68px; }
.pair .plain { gap: 7px; }
.fmt { width: 80px; }
.rows { flex-direction: column; gap: 4px; }
.font { width: 436px; margin-left: 15px; }
.para { width: 357px; margin-left: 15px; }
.row { display: flex; height: 35px; }
.combo { display: flex; width: 272px; margin-right: 4px; border: 1px solid #dfe2e6; }
.combo button { display: flex; align-items: center; justify-content: space-between; padding: 0 4px 0 2px; }
.family { flex: 1; }
.combo .size { width: 99px; border-left: 1px solid #dfe2e6; }
.ib { display: flex; align-items: center; width: 37px; padding-left: 6px; flex: none; }
.ib.dd { width: 50px; gap: 5px; }
.ib > :first-child { width: 24px; flex: none; text-align: center; }
.ib.on { background: #dde1e6; }
.ib > .ga { position: relative; font: 300 26px/26px "Open Sans", sans-serif; text-align: left; }
.ga sup, .ga sub { position: absolute; right: -2px; font-size: 14px; line-height: 14px; font-weight: 600; }
.ga sup { top: -1px; }
.ga sub { bottom: -2px; }
.wen { font-size: 13px; line-height: 12px; }
.bold { font: bold 25px/26px "Open Sans", sans-serif; }
.ital { font: italic 26px/26px "Liberation Serif", serif; }
.und { font: 300 23px/26px "Open Sans", sans-serif; text-underline-offset: 4px; text-decoration-thickness: 2px; }
.hollow { font: bold 26px/26px "Open Sans", sans-serif; color: #fff; -webkit-text-stroke: 1px #aaa; }
.vr { width: 1px; margin: 0 5px; background: #eceef0; }
.styles { display: flex; width: 412px; height: 77px; margin-left: 15px; border: 1px solid #e0e3e6; flex: none; }
.style { display: flex; flex-direction: column; align-items: center; width: 97px; height: 73px; padding: 0 2px 0 0; border: 3px solid transparent; }
.style.on { border-color: #dfe1e4; }
.style span { width: 90px; height: 41px; overflow: hidden; color: #000; font-family: "Liberation Serif", serif; line-height: 45px; text-align: left; flex: none; }
.t24 { font-size: 24px; }
.t32 { font-size: 33px; }
.t28 { font-size: 28px; }
.t26 { font-size: 26px; }
.spin { display: flex; flex-direction: column; align-items: center; justify-content: space-between; width: 22px; padding: 10px 0 9px; }
.spin .bar { box-shadow: 0 -4px 0 -2px #80848a; }
.typeset { width: 112px; margin: 0 0 0 12px; padding-right: 4px; }
.find { width: 108px; height: 88px; padding-left: 3px; border-left: 1px solid #f0f1f3; }
.pick { width: 70px; height: 88px; padding-right: 8px; border-right: 1px solid #f0f1f3; }

/* document */
.workspace { display: flex; flex: 1; min-height: 0; background: #f4f6f9; border-bottom: 1px solid #e3e6ea; }
.editor { display: flex; flex-direction: column; flex: 1; min-width: 0; padding-left: 37px; align-items: center; }
.ruler { position: relative; display: grid; grid-template-columns: repeat(24, 1fr); width: 808px; height: 38px; padding-top: 6px; flex: none; background: linear-gradient(#e9ecf1, #e9ecf1) 84px 6px / 636px 20px no-repeat; }
.ruler span { display: flex; justify-content: center; }
.ruler b { width: 19px; height: 20px; border: solid #8c9199; border-width: 0 1px; font: 13px/17px "Noto Sans", sans-serif; text-align: center; color: #4a5059; }
.mark { position: absolute; top: 0; width: 12px; height: 36px; fill: #fff; stroke: #555; }
.first { left: 79px; }
.hang { left: 104px; top: 2px; }
.last { left: 715px; }
.canvas { flex: 1; min-height: 0; overflow: hidden; }
.pages { width: 856px; padding: 0 11px; background: linear-gradient(90deg, #f4f6f9, #dfe1e4 11px, #dfe1e4 845px, #f4f6f9); }
.page { display: flex; flex-direction: column; height: 522px; padding: 0 100px 0 98px; background: #fff; color: #111; }
.text { height: 363px; margin-top: -4px; margin-bottom: 2px; font: 17px/33px "Noto Sans CJK SC", sans-serif; }
.text p { margin: 0; }
.text .in { padding-left: 34px; }
.text .full { text-align-last: justify; font-feature-settings: "palt"; }
.grid { width: 642px; margin: 0 -3px; border-collapse: collapse; table-layout: fixed; font: 14px/18px "Liberation Serif", "Noto Sans CJK SC", serif; text-align: center; }
.grid caption { height: 20px; font-size: 15px; line-height: 16px; }
.grid th, .grid td { height: 29px; padding: 0; border: 1px solid #000; font-weight: normal; }
.grid th { background: #e4e4e4; }
.c1 { width: 165px; }
.c2 { width: 291px; }
.c3 { width: 133px; }
.grid .lat { font-size: 15px; }
.sp { text-decoration: underline wavy #c22 1px; }
.crop { display: flex; justify-content: space-between; margin: 0 -24px; }
.crop i { width: 25px; border: solid #c4c4c4; border-width: 1px 1px 0 0; height: 26px; }
.crop i:last-child { border-width: 1px 0 0 1px; }
.crop.bottom { margin-top: 11px; }
.crop span { padding-top: 15px; font: 12px/14px "Liberation Serif", serif; color: #777; }
.second { margin-top: 19px; }
.running { height: 79px; padding-top: 58px; border-bottom: 1px solid #777; font-size: 13px; line-height: 18px; text-align: center; color: #888; }
.crop.top i { height: 21px; border-width: 0 1px 1px 0; }
.crop.top i:last-child { border-width: 0 0 1px 1px; }

/* scroll bar and side tools */
.scroll { display: flex; flex-direction: column; align-items: center; width: 24px; padding: 8px 2px 6px 0; background: #e7e9ef; color: #a0a4aa; }
.scroll button { width: 19px; height: 21px; margin-top: 7px; border-radius: 7px; background: #c6c9d0; display: flex; align-items: center; justify-content: center; }
.thumb { width: 19px; height: 55px; margin: 356px 0 auto; border-radius: 8px; background: #d4d7dc; }
.scroll .down { margin-top: 0; }
.nav { width: 12px; height: 12px; margin: 9px 0; fill: #8d929b; }
.sq { width: 10px; height: 10px; margin: 7px 0; border: 1px solid #8d929b; border-radius: 2px; }
.side { display: flex; flex-direction: column; align-items: center; gap: 30px; width: 64px; padding: 56px 4px 15px 0; }
.more { margin-top: auto; padding: 30px 12px 0; border-top: 1px solid #e3e6ea; }

/* status bar */
.status { display: flex; align-items: center; height: 42px; padding: 0 23px 0 14px; background: #f4f7f9; flex: none; position: relative; z-index: 2; }
.pg { width: 117px; }
.wc { width: 109px; }
.spell { gap: 5px; height: 36px; padding: 0 5px 0 6px; background: #e9eff9; }
.spell + .caret { margin-right: 22px; }
.status .plain { gap: 6px; }
.proof { margin-right: 27px; }
.compat { margin-right: 27px; }
.views { display: flex; align-items: center; margin-left: auto; margin-right: 12px; }
.views > .i { margin-right: 25px; }
.view { display: flex; align-items: center; justify-content: center; width: 34px; height: 36px; margin-right: 5px; }
.view.on { background: #dce1e6; }
.zoomv { margin-right: 15px; padding-left: 12px; border-left: 1px solid #e4e7ea; }
.status .zoomv { gap: 11px; color: #555d6b; }
.zoom { appearance: none; width: 210px; height: 20px; margin: 0 13px 0 17px; background: linear-gradient(#555, #555) 0 9px / 64px 2px no-repeat, linear-gradient(#d6dade, #d6dade) 0 9px / 100% 2px no-repeat; }
.zoom::-webkit-slider-thumb { appearance: none; width: 19px; height: 19px; border: 2px solid #666; border-radius: 50%; background: #eee; }
.status > .i { margin-left: 16px; }

/* taskbar */
.taskbar { display: flex; align-items: center; height: 60px; padding-right: 6px; background: linear-gradient(90deg, #26313f, #283442 60%, #242527 78%, #222); color: #fff; flex: none; position: relative; z-index: 2; }
.start { margin: 0 46px 0 24px; }
.start svg { width: 24px; height: 24px; }
.swirl { width: 34px; height: 34px; }
.find-box { display: flex; align-items: center; width: 275px; height: 43px; margin-left: 22px; padding-left: 6px; background: #ededed; color: #111; font-size: 15px; }
.find-box .caret { margin: 0 8px 0 2px; }
.find-box input { flex: 1; min-width: 0; }
.find-box button { width: 70px; height: 43px; background: #2488fb; color: #fff; }
.grip { width: 5px; height: 36px; margin: 0 22px 0 11px; border: solid #48525e; border-width: 0 1px; }
.apps { display: flex; height: 60px; gap: 12px; }
.apps button { display: flex; align-items: center; justify-content: center; width: 63px; }
.apps svg { width: 36px; height: 36px; }
.apps .open { border-bottom: 3px solid #7fb2e6; }
.apps .active { width: 73px; margin-left: -4px; background: #525d68; }
.weather { position: relative; display: flex; align-items: center; gap: 12px; width: 164px; margin-left: auto; font-size: 20px; }
.weather svg { width: 34px; height: 28px; }
.mem { position: absolute; left: 49px; top: -12px; font-size: 18px; text-align: center; }
.tray { display: flex; align-items: center; }
.tray > * { width: 24px; height: 32px; margin: 0 6px; }
.ln { fill: none; stroke: #fff; stroke-width: 1.5; }
.tray .ime { font-size: 19px; line-height: 32px; text-align: center; }
.tray .q { margin-left: 13px; }
.clock { width: 125px; padding-left: 5px; text-align: center; }
.notice { position: relative; width: 46px; height: 40px; margin: 0 0 0 13px; border-right: 1px solid #666; }
.notice svg { display: block; width: 25px; height: 25px; }
.notice span { position: absolute; left: 16px; top: 17px; width: 19px; height: 20px; background: #dc0f19; color: #fff; font-size: 14px; line-height: 20px; text-align: center; }

/* overlays */
.meter { position: absolute; z-index: 3; }
.meter.left { left: 2px; top: 8px; width: 8px; height: 58px; border-radius: 4px; background: linear-gradient(#26375e 60%, #555 75%, #3db04a 80%); }
.meter.right { right: 0; top: 174px; width: 15px; height: 89px; border: solid #4c5060; border-width: 10px 2px 8px 6px; border-radius: 6px 0 0 6px; background: repeating-linear-gradient(transparent 0 2px, #3c4048 2px 3px), linear-gradient(#4c5060 35%, #c4c050 38%, #3dae88); }
.marks { position: absolute; z-index: 1; inset: 0 0 102px; padding-top: 22px; overflow: hidden; pointer-events: none; font: 36px/126px "Open Sans", sans-serif; color: rgba(90, 90, 90, .25); }
.marks div { display: flex; height: 126px; margin-left: -9px; }
.marks div:nth-child(even) { margin-left: -143px; }
.marks span { width: 265px; flex: none; }
.notice-text { position: absolute; z-index: 3; left: 674px; top: 522px; font: 45px/58px "Liberation Sans", "Noto Sans CJK SC", sans-serif; color: #c80d12; }
.mouse { position: absolute; z-index: 3; left: 1840px; top: 747px; width: 14px; height: 20px; }
```
